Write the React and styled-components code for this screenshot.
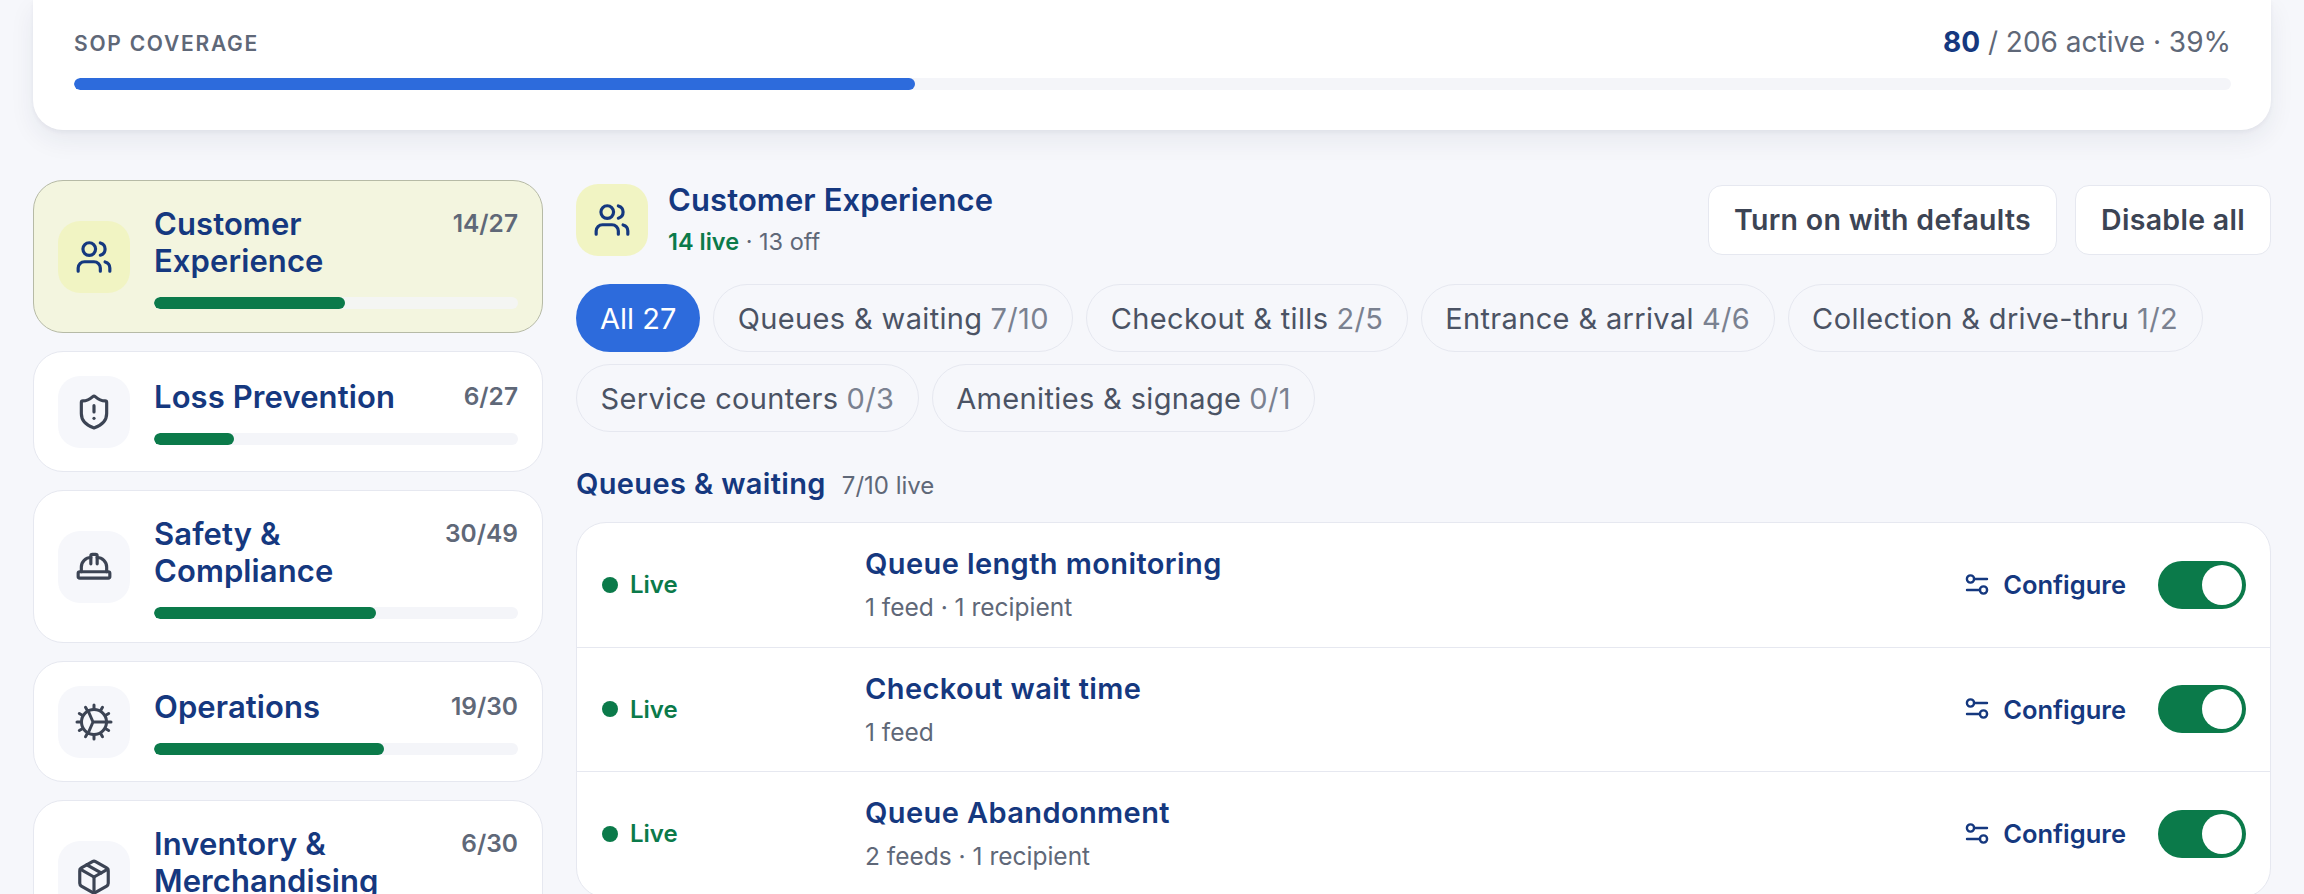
import React from "react";
import styled, { createGlobalStyle } from "styled-components";
import { Users, ShieldAlert, HardHat, Package } from "lucide-react";

const navy = "#15387f";
const green = "#0b7a4a";
const FONT = `Inter, "Noto Sans", "Liberation Sans", sans-serif`;

const GlobalStyle = createGlobalStyle`
  html, body {
    margin: 0;
    height: 894px;
    overflow: hidden;
    background: #f6f7fb;
  }
  body {
    font-family: ${FONT};
  }
  button {
    font-family: inherit;
  }
`;

const Page = styled.div`
  height: 894px;
  overflow: hidden;
  padding: 0 33px;
  box-sizing: border-box;
`;

const CoverageCard = styled.section`
  background: #fff;
  height: 130px;
  box-sizing: border-box;
  padding: 24px 40px 0 41px;
  border-radius: 0 0 30px 30px;
  box-shadow: 0 2px 4px rgba(30, 40, 70, 0.05), 0 10px 26px rgba(30, 40, 70, 0.07);
`;

const CoverageHead = styled.div`
  display: flex;
  justify-content: space-between;
  align-items: center;
  height: 36px;
  margin-bottom: 18px;
`;

const CoverageLabel = styled.div`
  font-size: 21px;
  font-weight: 600;
  letter-spacing: 1.75px;
  color: #5f6878;
  padding-top: 3px;
`;

const CoverageValue = styled.div`
  font-size: 28px;
  color: #5f6878;
  b {
    color: ${navy};
    font-weight: 700;
  }
`;

const Track = styled.div`
  height: 12px;
  border-radius: 6px;
  background: ${(p) => (p.$active ? "#f4f5f3" : "#f4f5f9")};
  overflow: hidden;
`;

const Fill = styled.div`
  height: 100%;
  border-radius: 6px;
  background: ${(p) => p.$color};
`;

const Columns = styled.div`
  display: grid;
  grid-template-columns: 510px 1fr;
  gap: 33px;
  margin-top: 50px;
`;

const Sidebar = styled.nav`
  display: flex;
  flex-direction: column;
  gap: 18px;
`;

const CategoryCard = styled.div`
  display: flex;
  align-items: center;
  gap: 24px;
  padding: 23.5px 24px;
  border-radius: 30px;
  border: 1.5px solid ${(p) => (p.$active ? "#b6baa6" : "#e6e8f0")};
  background: ${(p) => (p.$active ? "#f3f5df" : "#fff")};
`;

const IconTile = styled.div`
  flex: none;
  width: 72px;
  height: 72px;
  border-radius: 22px;
  display: flex;
  align-items: center;
  justify-content: center;
  background: ${(p) => (p.$active ? "#f1f4c3" : "#f6f7fb")};
  color: ${(p) => (p.$active ? navy : "#3c4454")};
`;

const CategoryBody = styled.div`
  flex: 1;
  min-width: 0;
`;

const CategoryTop = styled.div`
  display: flex;
  justify-content: space-between;
  align-items: flex-start;
  gap: 12px;
  margin-bottom: 18px;
`;

const CategoryName = styled.div`
  font-size: 31px;
  line-height: 37px;
  font-weight: 600;
  color: ${navy};
  letter-spacing: 0.1px;
  max-width: 250px;
`;

const CategoryCount = styled.div`
  font-size: 24.5px;
  line-height: 37px;
  font-weight: 600;
  color: #5f6878;
`;

const Main = styled.main`
  padding-top: 3px;
`;

const MainHead = styled.header`
  display: flex;
  align-items: center;
  justify-content: space-between;
  margin-bottom: 28px;
`;

const HeadLeft = styled.div`
  display: flex;
  align-items: center;
  gap: 20px;
`;

const HeadTitle = styled.h1`
  margin: 0 0 11px;
  font-size: 31px;
  line-height: 34px;
  font-weight: 600;
  letter-spacing: 0.1px;
  color: ${navy};
`;

const HeadSub = styled.div`
  font-size: 23.5px;
  line-height: 28px;
  color: #5f6878;
  b {
    color: ${green};
    font-weight: 600;
  }
`;

const HeadActions = styled.div`
  display: flex;
  gap: 18px;
`;

const GhostButton = styled.button`
  height: 70px;
  padding: 0 25px;
  border-radius: 14px;
  border: 1.5px solid #e6e8f0;
  background: #fff;
  font-size: 28.5px;
  font-weight: 600;
  letter-spacing: 0.3px;
  color: #3c4454;
`;

const Chips = styled.div`
  display: flex;
  flex-wrap: wrap;
  gap: 12px 13px;
  margin-bottom: 34px;
`;

const Chip = styled.div`
  height: 68px;
  box-sizing: border-box;
  padding: 0 ${(p) => (p.$active ? 24 : 23.5)}px;
  display: flex;
  align-items: center;
  gap: 8px;
  border-radius: 34px;
  font-size: 29px;
  letter-spacing: ${(p) => (p.$active ? 0 : 0.35)}px;
  color: ${(p) => (p.$active ? "#fff" : "#4b5364")};
  background: ${(p) => (p.$active ? "#2d6bdc" : "transparent")};
  border: ${(p) => (p.$active ? "none" : "1.5px solid #e6e8f0")};
  span {
    color: ${(p) => (p.$active ? "#fff" : "#7a8190")};
  }
`;

const SectionHead = styled.div`
  display: flex;
  align-items: baseline;
  gap: 16px;
  margin-bottom: 20px;
  height: 36px;
`;

const SectionTitle = styled.h2`
  margin: 0;
  font-size: 29px;
  font-weight: 600;
  letter-spacing: 0.35px;
  color: ${navy};
`;

const SectionCount = styled.span`
  font-size: 24px;
  color: #5f6878;
`;

const List = styled.div`
  background: #fff;
  border: 1.5px solid #e6e8f0;
  border-radius: 30px;
  overflow: hidden;
`;

const Row = styled.div`
  display: flex;
  align-items: center;
  height: 124.5px;
  padding: 0 24px 0 25px;
  box-sizing: border-box;
  border-bottom: 1.5px solid #e6e8f0;
`;

const Status = styled.div`
  width: 263px;
  flex: none;
  display: flex;
  align-items: center;
  gap: 12px;
  font-size: 24px;
  font-weight: 600;
  color: ${green};
`;

const Dot = styled.i`
  width: 16px;
  height: 16px;
  border-radius: 50%;
  background: ${green};
`;

const RowBody = styled.div`
  flex: 1;
`;

const RowTitle = styled.div`
  font-size: 29px;
  line-height: 38px;
  font-weight: 600;
  letter-spacing: 0.4px;
  color: ${navy};
  margin-bottom: 7px;
`;

const RowMeta = styled.div`
  font-size: 24.5px;
  line-height: 34px;
  color: #5f6878;
`;

const ConfigureLink = styled.div`
  display: flex;
  align-items: center;
  gap: 14px;
  margin-right: 32px;
  font-size: 25.5px;
  font-weight: 600;
  color: ${navy};
`;

const Switch = styled.div`
  width: 88px;
  height: 48px;
  box-sizing: border-box;
  padding: 4px;
  border-radius: 24px;
  background: ${green};
  display: flex;
  justify-content: flex-end;
  &::after {
    content: "";
    width: 40px;
    height: 40px;
    border-radius: 50%;
    background: #fff;
  }
`;

// twelve small teeth round the gear rim
const teeth = Array.from({ length: 12 }, (_, i) => {
  const a = (i * Math.PI) / 6;
  const x1 = 19 + 13 * Math.cos(a);
  const y1 = 19 + 13 * Math.sin(a);
  const x2 = 19 + 17 * Math.cos(a);
  const y2 = 19 + 17 * Math.sin(a);
  return `M${x1.toFixed(1)} ${y1.toFixed(1)}L${x2.toFixed(1)} ${y2.toFixed(1)}`;
}).join("");

const GearPlay = () => (
  <svg width="38" height="38" viewBox="0 0 38 38" fill="none" stroke="currentColor" strokeWidth="3" strokeLinecap="round" strokeLinejoin="round">
    <circle cx="19" cy="19" r="12.5" />
    <path d={teeth} />
    <path d="M13 7.5 18 19l-5 11.5M18 19h14" />
  </svg>
);

const ConfigIcon = () => (
  <svg width="24" height="22" viewBox="0 0 24 22" fill="none" stroke="currentColor" strokeWidth="2.4" strokeLinecap="round">
    <circle cx="5.5" cy="5" r="3.6" />
    <path d="M9.5 5H22M2 16h13" />
    <circle cx="18.5" cy="16" r="3.6" />
  </svg>
);

const categories = [
  { name: "Customer Experience", count: "14/27", pct: 52.5, icon: <Users size={38} strokeWidth={2} />, active: true },
  { name: "Loss Prevention", count: "6/27", pct: 22, icon: <ShieldAlert size={38} strokeWidth={2} /> },
  { name: "Safety & Compliance", count: "30/49", pct: 61, icon: <HardHat size={38} strokeWidth={2} /> },
  { name: "Operations", count: "19/30", pct: 63.3, icon: <GearPlay /> },
  { name: "Inventory & Merchandising", count: "6/30", pct: 20, icon: <Package size={38} strokeWidth={2} /> },
];

const chips = [
  ["Queues & waiting", "7/10"],
  ["Checkout & tills", "2/5"],
  ["Entrance & arrival", "4/6"],
  ["Collection & drive-thru", "1/2"],
  ["Service counters", "0/3"],
  ["Amenities & signage", "0/1"],
];

const rows = [
  { title: "Queue length monitoring", meta: "1 feed · 1 recipient" },
  { title: "Checkout wait time", meta: "1 feed" },
  { title: "Queue Abandonment", meta: "2 feeds · 1 recipient" },
];

export default function App() {
  return (
    <Page>
      <GlobalStyle />
      <CoverageCard>
        <CoverageHead>
          <CoverageLabel>SOP COVERAGE</CoverageLabel>
          <CoverageValue>
            <b>80</b> / 206 active · 39%
          </CoverageValue>
        </CoverageHead>
        <Track>
          <Fill $color="#2d6bdc" style={{ width: "39%" }} />
        </Track>
      </CoverageCard>
      <Columns>
        <Sidebar>
          {categories.map((c) => (
            <CategoryCard key={c.name} $active={c.active}>
              <IconTile $active={c.active}>{c.icon}</IconTile>
              <CategoryBody>
                <CategoryTop>
                  <CategoryName>{c.name}</CategoryName>
                  <CategoryCount>{c.count}</CategoryCount>
                </CategoryTop>
                <Track $active={c.active}>
                  <Fill $color={green} style={{ width: `${c.pct}%` }} />
                </Track>
              </CategoryBody>
            </CategoryCard>
          ))}
        </Sidebar>
        <Main>
          <MainHead>
            <HeadLeft>
              <IconTile $active>
                <Users size={38} strokeWidth={2} />
              </IconTile>
              <div>
                <HeadTitle>Customer Experience</HeadTitle>
                <HeadSub>
                  <b>14 live</b> · 13 off
                </HeadSub>
              </div>
            </HeadLeft>
            <HeadActions>
              <GhostButton>Turn on with defaults</GhostButton>
              <GhostButton>Disable all</GhostButton>
            </HeadActions>
          </MainHead>
          <Chips>
            <Chip $active>All 27</Chip>
            {chips.map(([label, n]) => (
              <Chip key={label}>
                {label} <span>{n}</span>
              </Chip>
            ))}
          </Chips>
          <SectionHead>
            <SectionTitle>Queues &amp; waiting</SectionTitle>
            <SectionCount>7/10 live</SectionCount>
          </SectionHead>
          <List>
            {rows.map((r) => (
              <Row key={r.title}>
                <Status>
                  <Dot />
                  Live
                </Status>
                <RowBody>
                  <RowTitle>{r.title}</RowTitle>
                  <RowMeta>{r.meta}</RowMeta>
                </RowBody>
                <ConfigureLink>
                  <ConfigIcon />
                  Configure
                </ConfigureLink>
                <Switch />
              </Row>
            ))}
          </List>
        </Main>
      </Columns>
    </Page>
  );
}
